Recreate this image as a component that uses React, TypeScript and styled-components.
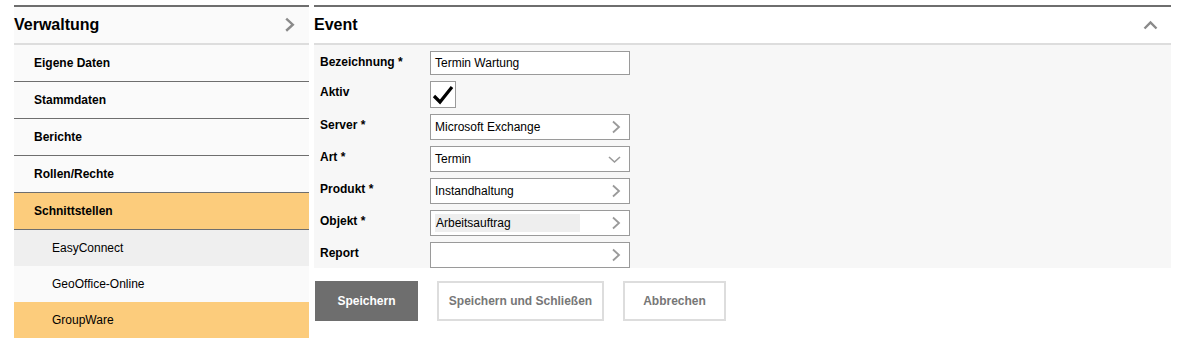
import React from "react"
import styled, { createGlobalStyle } from "styled-components"

const GlobalStyle = createGlobalStyle`
    body {
        margin: 0;
        background: #ffffff;
        font-family: "Liberation Sans", Arial, sans-serif;
        color: #000;
    }
`

const Page = styled.div`
    display: flex;
    flex-direction: row;
    align-items: flex-start;
    gap: 5px;
    padding: 5px 0 0 14px;
`

const Sidebar = styled.nav`
    width: 295px;
    border-top: 2px solid #6e6e6e;
    background: #fafafa;
`

const PanelHeader = styled.div`
    display: flex;
    align-items: center;
    justify-content: space-between;
    height: 36px;
    border-bottom: 2px solid #dddddd;
    background: #fafafa;
    font-size: 16px;
    font-weight: bold;
`

const HeaderIcon = styled.span<{ $right: number }>`
    display: flex;
    margin-right: ${(p) => p.$right}px;
`

const MenuItem = styled.div<{ $active?: boolean }>`
    display: flex;
    align-items: center;
    height: 36px;
    padding-left: 20px;
    border-bottom: 1px solid #6e6e6e;
    background: ${(p) => (p.$active ? "#fccc7c" : "#fafafa")};
    font-size: 12px;
    font-weight: bold;
`

const SubItem = styled.div<{ $bg: string }>`
    display: flex;
    align-items: center;
    height: 36px;
    padding-left: 38px;
    background: ${(p) => p.$bg};
    font-size: 12px;
`

const Main = styled.section`
    width: 857px;
    border-top: 2px solid #6e6e6e;
`

const MainHeader = styled(PanelHeader)`
    background: #ffffff;
`

const FormBody = styled.div`
    display: flex;
    flex-direction: column;
    gap: 6px;
    padding: 6px 0 0 6px;
    background: #f7f7f7;
`

const Row = styled.div`
    display: flex;
    align-items: flex-start;
`

const Label = styled.div`
    width: 110px;
    padding-top: 4px;
    font-size: 12px;
    font-weight: bold;
`

const Field = styled.div<{ $h?: number }>`
    box-sizing: border-box;
    display: flex;
    align-items: center;
    justify-content: space-between;
    width: 200px;
    height: ${(p) => p.$h ?? 26}px;
    padding: 0 8px 0 4px;
    border: 1px solid #9a9a9a;
    background: #ffffff;
    font-size: 12px;
`

const Selected = styled.span`
    flex: 0 0 144px;
    padding: 2px 0 2px 1px;
    background: #eeeeee;
`

const CheckBox = styled.div`
    box-sizing: border-box;
    display: flex;
    align-items: center;
    justify-content: center;
    width: 26px;
    height: 27px;
    border: 1px solid #9a9a9a;
    background: #ffffff;
`

const Actions = styled.div`
    display: flex;
    gap: 19px;
    margin-top: 13px;
    padding-left: 1px;
`

const Button = styled.button<{ $primary?: boolean; $w: number }>`
    box-sizing: border-box;
    width: ${(p) => p.$w}px;
    height: 40px;
    padding: 0;
    white-space: nowrap;
    border: ${(p) => (p.$primary ? "none" : "2px solid #dddddd")};
    background: ${(p) => (p.$primary ? "#6e6e6e" : "#ffffff")};
    color: ${(p) => (p.$primary ? "#ffffff" : "#777777")};
    font-family: "Liberation Sans", Arial, sans-serif;
    font-size: 12px;
    font-weight: bold;
`

const ChevronRight = ({ size = 10, color = "#9a9a9a", width = 1.8 }) => (
    <svg width={size} height={size * 1.4} viewBox="0 0 10 14">
        <path d="M2 1.5 L8 7 L2 12.5" fill="none" stroke={color} strokeWidth={width} />
    </svg>
)

const ChevronDown = () => (
    <svg width="13" height="9" viewBox="0 0 13 9">
        <path d="M1 2 L6.5 7 L12 2" fill="none" stroke="#9a9a9a" strokeWidth="1.6" />
    </svg>
)

const ChevronUp = () => (
    <svg width="15" height="10" viewBox="0 0 15 10">
        <path d="M1.5 8.5 L7.5 2.5 L13.5 8.5" fill="none" stroke="#8a8a8a" strokeWidth="2.4" />
    </svg>
)

const Check = () => (
    <svg width="22" height="20" viewBox="0 0 22 20">
        <path d="M2 11 L8 17 L20 2" fill="none" stroke="#000" strokeWidth="3.2" strokeLinejoin="miter" />
    </svg>
)

const menu = ["Eigene Daten", "Stammdaten", "Berichte", "Rollen/Rechte"]

const fields = [
    { label: "Server *", value: "Microsoft Exchange", icon: "right" },
    { label: "Art *", value: "Termin", icon: "down" },
    { label: "Produkt *", value: "Instandhaltung", icon: "right" },
    { label: "Objekt *", value: "Arbeitsauftrag", icon: "right", selected: true },
    { label: "Report", value: "", icon: "right" },
]

export default function App() {
    return (
        <>
            <GlobalStyle />
            <Page>
                <Sidebar>
                    <PanelHeader>
                        Verwaltung
                        <HeaderIcon $right={14}>
                            <ChevronRight size={11} color="#8a8a8a" width={2.2} />
                        </HeaderIcon>
                    </PanelHeader>
                    {menu.map((m) => (
                        <MenuItem key={m}>{m}</MenuItem>
                    ))}
                    <MenuItem $active>Schnittstellen</MenuItem>
                    <SubItem $bg="#efefef">EasyConnect</SubItem>
                    <SubItem $bg="#fafafa">GeoOffice-Online</SubItem>
                    <SubItem $bg="#fccc7c">GroupWare</SubItem>
                </Sidebar>
                <Main>
                    <MainHeader>
                        Event
                        <HeaderIcon $right={13}>
                            <ChevronUp />
                        </HeaderIcon>
                    </MainHeader>
                    <FormBody>
                        <Row>
                            <Label>Bezeichnung *</Label>
                            <Field $h={24}>Termin Wartung</Field>
                        </Row>
                        <Row>
                            <Label>Aktiv</Label>
                            <CheckBox>
                                <Check />
                            </CheckBox>
                        </Row>
                        {fields.map((f) => (
                            <Row key={f.label}>
                                <Label>{f.label}</Label>
                                <Field>
                                    {f.selected ? <Selected>{f.value}</Selected> : <span>{f.value}</span>}
                                    {f.icon === "down" ? <ChevronDown /> : <ChevronRight />}
                                </Field>
                            </Row>
                        ))}
                    </FormBody>
                    <Actions>
                        <Button $primary $w={103}>Speichern</Button>
                        <Button $w={167}>Speichern und Schließen</Button>
                        <Button $w={103}>Abbrechen</Button>
                    </Actions>
                </Main>
            </Page>
        </>
    )
}
